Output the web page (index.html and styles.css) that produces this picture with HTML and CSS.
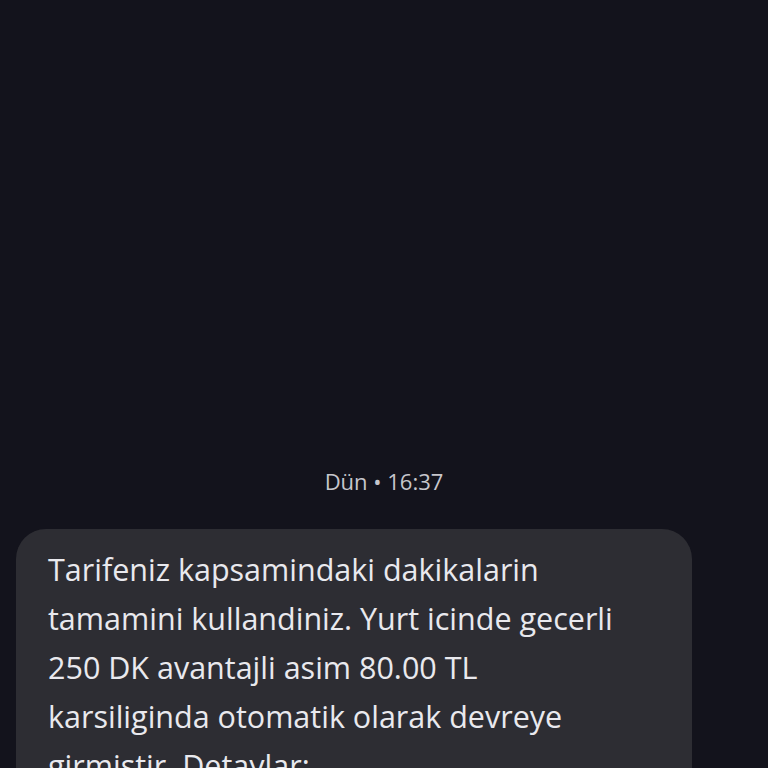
FILE: index.html
```html
<!DOCTYPE html>
<html lang="tr">
<head>
    <meta charset="UTF-8">
    <meta name="viewport" content="width=device-width, initial-scale=1.0">
    <title>Mesajlar</title>
    <link rel="stylesheet" href="styles.css">
</head>
<body>
    <div class="thread">
        <div class="timestamp">Dün • 16:37</div>
        <div class="bubble">
            Tarifeniz kapsamindaki dakikalarin<br>
            tamamini kullandiniz. Yurt icinde gecerli<br>
            250 DK avantajli asim 80.00 TL<br>
            karsiliginda otomatik olarak devreye<br>
            girmistir. Detaylar:
        </div>
    </div>
</body>
</html>
```

FILE: styles.css
```css
html, body {
    height: 100%;
}
body {
    margin: 0;
    background: #13131c;
    font-family: "Open Sans", Roboto, sans-serif;
    overflow: hidden;
}
.thread {
    display: flex;
    flex-direction: column;
    padding: 466px 0 0 16px;
}
.timestamp {
    align-self: center;
    margin-left: -16px;
    color: #c6c6cc;
    font-size: 22px;
    line-height: 30px;
}
.bubble {
    width: 612px;
    margin-top: 33px;
    padding: 16px 32px 40px;
    background: #2d2d33;
    border-radius: 30px;
    color: #e9e9ee;
    font-size: 30.5px;
    line-height: 49px;
}
```
